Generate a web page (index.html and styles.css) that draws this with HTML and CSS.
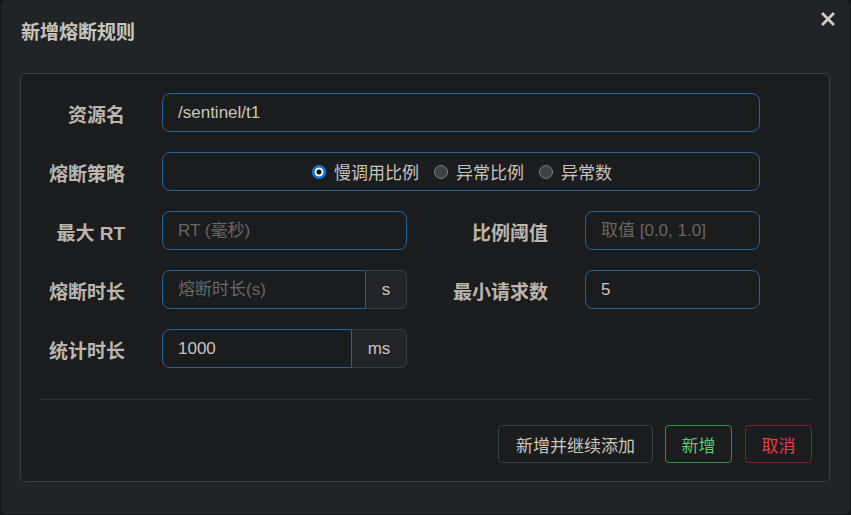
FILE: index.html
```html
<!DOCTYPE html>
<html lang="zh">
<head>
<meta charset="utf-8">
<title>新增熔断规则</title>
<link rel="stylesheet" href="styles.css">
</head>
<body>
<div class="modal">
  <div class="modal-header">
    <h4 class="modal-title">新增熔断规则</h4>
    <span class="close"><svg width="14" height="14" viewBox="0 0 14 14"><path d="M2 2 L12 12 M12 2 L2 12" stroke="#d2cdc5" stroke-width="2.8" stroke-linecap="square"/></svg></span>
  </div>
  <div class="panel">
    <div class="form">
      <div class="row">
        <label class="label">资源名</label>
        <div class="control full"><input class="input" value="/sentinel/t1"></div>
      </div>
      <div class="row">
        <label class="label">熔断策略</label>
        <div class="control full radios">
          <span class="radio-item"><span class="radio checked"></span>慢调用比例</span>
          <span class="radio-item"><span class="radio"></span>异常比例</span>
          <span class="radio-item"><span class="radio"></span>异常数</span>
        </div>
      </div>
      <div class="row">
        <label class="label">最大 RT</label>
        <div class="control half"><input class="input" placeholder="RT (毫秒)"></div>
        <label class="label right-label">比例阈值</label>
        <div class="control small"><input class="input" placeholder="取值 [0.0, 1.0]"></div>
      </div>
      <div class="row">
        <label class="label">熔断时长</label>
        <div class="control half group"><input class="input" placeholder="熔断时长(s)"><span class="addon addon-s">s</span></div>
        <label class="label right-label">最小请求数</label>
        <div class="control small"><input class="input" value="5"></div>
      </div>
      <div class="row">
        <label class="label">统计时长</label>
        <div class="control half group"><input class="input" value="1000"><span class="addon addon-ms">ms</span></div>
      </div>
    </div>
    <div class="divider"></div>
    <div class="actions">
      <button class="btn btn-default">新增并继续添加</button>
      <button class="btn btn-success">新增</button>
      <button class="btn btn-danger">取消</button>
    </div>
  </div>
</div>
</body>
</html>
```

FILE: styles.css
```css
* { box-sizing: border-box; }
html, body {
  margin: 0;
  padding: 0;
  background: #151618;
  font-family: "Liberation Sans", "Noto Sans CJK SC", sans-serif;
}
body { width: 851px; height: 515px; overflow: hidden; }

.modal {
  margin-left: 1px;
  width: 849px;
  height: 514px;
  background: #212427;
  border-radius: 6px;
  padding: 0 20px 0 19px;
}

.modal-header {
  height: 73px;
  display: flex;
  justify-content: space-between;
  align-items: flex-start;
  padding-top: 21px;
}
.modal-title {
  margin: 0 0 0 1px;
  font-size: 19px;
  line-height: 24px;
  font-weight: bold;
  color: #c9c4bc;
}
.close {
  display: block;
  margin-top: -9px;
  margin-right: -5px;
  width: 14px;
  height: 14px;
}
.close svg { display: block; }

.panel {
  background: #1b1c1e;
  border: 1px solid #3a3d41;
  border-radius: 5px;
  height: 409px;
  padding: 19px 17px 18px 19px;
}

.form {
  display: flex;
  flex-direction: column;
  gap: 20px;
}
.row {
  display: flex;
  align-items: center;
  height: 39px;
}
.label {
  width: 85px;
  margin-right: 37px;
  padding-top: 2px;
  text-align: right;
  font-size: 19px;
  font-weight: bold;
  color: #bcb5ac;
  white-space: nowrap;
}
.right-label { width: 141px; }

.control { height: 39px; display: flex; }
.full { width: 598px; }
.half { width: 245px; }
.small { width: 175px; }

.input {
  width: 100%;
  height: 39px;
  background: #1b1c1e;
  border: 1px solid #2562a0;
  border-radius: 8px;
  padding: 1px 15px 0;
  font-family: "Liberation Sans", "Noto Sans CJK SC", sans-serif;
  font-size: 17px;
  color: #c9c4bc;
  outline: none;
}
.input::placeholder { color: #6a6660; }

.group .input {
  flex: 1;
  min-width: 0;
  border-top-right-radius: 0;
  border-bottom-right-radius: 0;
}
.addon {
  display: flex;
  align-items: center;
  justify-content: center;
  background: #222427;
  border: 1px solid #3a3d41;
  border-left: none;
  border-radius: 0 6px 6px 0;
  font-size: 17px;
  color: #c9c4bc;
}
.addon-s { width: 41px; }
.addon-ms { width: 55px; }

.radios {
  border: 1px solid #2562a0;
  border-radius: 8px;
  align-items: center;
  justify-content: center;
  gap: 15px;
  font-size: 17px;
  color: #c9c4bc;
  padding-left: 2px;
}
.radio-item {
  display: flex;
  align-items: center;
  gap: 8px;
}
.radio {
  flex-shrink: 0;
  width: 14px;
  height: 14px;
  border-radius: 50%;
  background: #404142;
  border: 1px solid #7d7d7d;
}
.radio.checked {
  border: none;
  background: radial-gradient(circle, #151515 0 2.3px, #f4f4f4 2.8px 4.2px, #1a75e0 4.7px);
}

.divider {
  height: 1px;
  background: #2e3033;
  margin: 31px 0 25px;
}

.actions {
  display: flex;
  justify-content: flex-end;
  gap: 12px;
}
.btn {
  height: 38px;
  background: transparent;
  border: 1px solid #3c3f43;
  border-radius: 4px;
  font-family: "Liberation Sans", "Noto Sans CJK SC", sans-serif;
  font-size: 17px;
  padding: 0 15px;
  color: #c9c4bc;
}
.btn-default { width: 155px; }
.btn-success {
  width: 67px;
  border-color: #23973f;
  color: #52d06c;
}
.btn-danger {
  width: 67px;
  border-color: #8c1f2b;
  color: #e2414f;
  margin-left: 1px;
}
```
